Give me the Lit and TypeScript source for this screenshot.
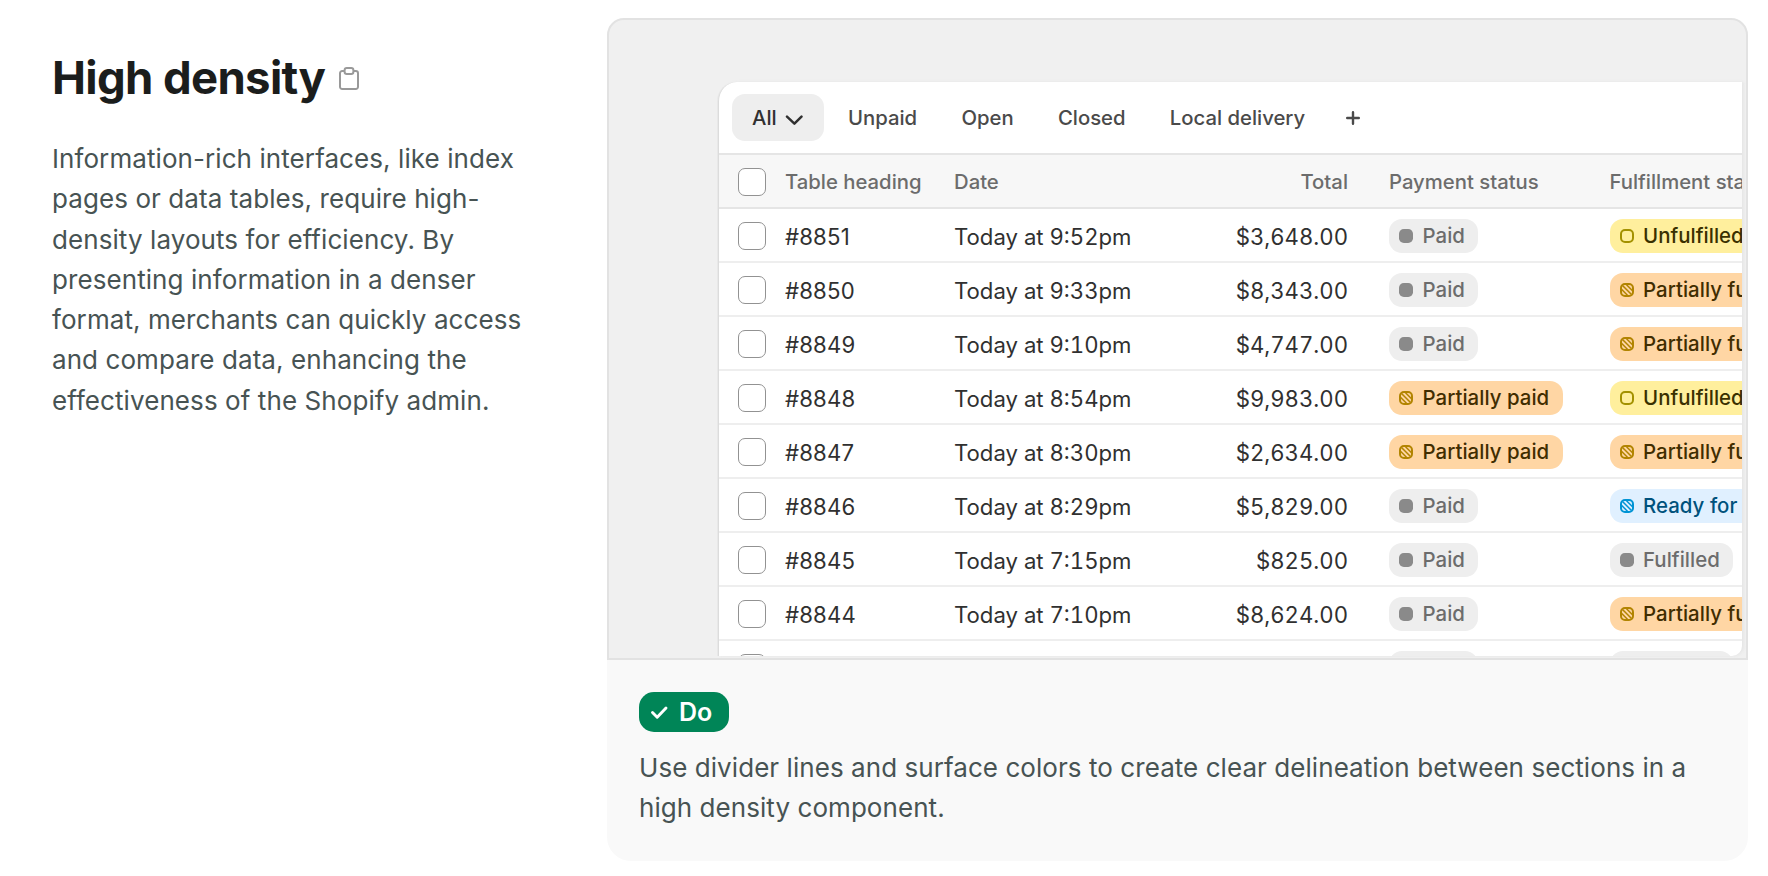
import { LitElement, html, css, svg, nothing } from "lit";

type Tone = "grey" | "yellow" | "orange" | "blue";
interface Status {
  label: string;
  tone: Tone;
}
interface Order {
  id: string;
  date: string;
  total: string;
  payment: Status;
  fulfillment: Status;
}

const paid: Status = { label: "Paid", tone: "grey" };
const partlyPaid: Status = { label: "Partially paid", tone: "orange" };
const unfulfilled: Status = { label: "Unfulfilled", tone: "yellow" };
const partlyFulfilled: Status = { label: "Partially fulfilled", tone: "orange" };
const ready: Status = { label: "Ready for pickup", tone: "blue" };
const fulfilled: Status = { label: "Fulfilled", tone: "grey" };

const orders: Order[] = [
  { id: "#8851", date: "Today at 9:52pm", total: "$3,648.00", payment: paid, fulfillment: unfulfilled },
  { id: "#8850", date: "Today at 9:33pm", total: "$8,343.00", payment: paid, fulfillment: partlyFulfilled },
  { id: "#8849", date: "Today at 9:10pm", total: "$4,747.00", payment: paid, fulfillment: partlyFulfilled },
  { id: "#8848", date: "Today at 8:54pm", total: "$9,983.00", payment: partlyPaid, fulfillment: unfulfilled },
  { id: "#8847", date: "Today at 8:30pm", total: "$2,634.00", payment: partlyPaid, fulfillment: partlyFulfilled },
  { id: "#8846", date: "Today at 8:29pm", total: "$5,829.00", payment: paid, fulfillment: ready },
  { id: "#8845", date: "Today at 7:15pm", total: "$825.00", payment: paid, fulfillment: fulfilled },
  { id: "#8844", date: "Today at 7:10pm", total: "$8,624.00", payment: paid, fulfillment: partlyFulfilled },
  { id: "", date: "", total: "", payment: paid, fulfillment: fulfilled },
];

class StatusBadge extends LitElement {
  static properties = { label: {}, tone: {} };
  declare label: string;
  declare tone: Tone;

  static styles = css`
    :host {
      display: inline-flex;
    }
    .badge {
      display: flex;
      align-items: center;
      gap: 9.5px;
      height: 34px;
      padding: 0 13.5px 0 10px;
      border-radius: 13px;
      font-size: 20.4px;
      font-weight: 500;
      letter-spacing: 0.04px;
      white-space: nowrap;
    }
    .label {
      padding-bottom: 1.5px;
    }
    svg {
      display: block;
      width: 14px;
      height: 14px;
      flex: none;
    }
    .grey {
      background: #eeeeee;
      color: #6c6c6c;
      font-weight: 450;
    }
    .grey svg {
      color: #8a8a8a;
    }
    .yellow {
      background: #ffef9d;
      color: #3a3000;
    }
    .yellow svg {
      color: #a39100;
    }
    .orange {
      background: #ffd6a4;
      color: #412d00;
    }
    .orange svg {
      color: #b28400;
    }
    .blue {
      background: #e0f0ff;
      color: #00527c;
    }
    .blue svg {
      color: #0094d5;
    }
  `;

  private pip() {
    if (this.tone === "grey") {
      return svg`<rect width="14" height="14" rx="4.8" fill="currentColor" />`;
    }
    const frame = svg`<rect x="1" y="1" width="12" height="12" rx="4" fill="none" stroke="currentColor" stroke-width="2" />`;
    if (this.tone === "yellow") return frame;
    return svg`${frame}<path d="M1.500 6.300l6.200 6.200M2.500 2.500l9 9M6.300 1.500l6.200 6.200" fill="none" stroke="currentColor" stroke-width="1.5" />`;
  }

  render() {
    return html`<span class="badge ${this.tone}"
      ><svg viewBox="0 0 14 14">${this.pip()}</svg><span class="label">${this.label}</span></span
    >`;
  }
}
customElements.define("status-badge", StatusBadge);

class OrderTable extends LitElement {
  static styles = css`
    :host {
      display: block;
      width: 1024px;
      height: 574px;
      overflow: hidden;
      box-sizing: border-box;
      border-left: 1px solid #dcdcdc;
      border-radius: 19px 0 10px 0;
      background: #fff;
      box-shadow: -1px 0 0 #e8e8e8, 2px 0 3px #e6e6e6;
    }
    .tabs {
      display: flex;
      align-items: center;
      box-sizing: border-box;
      height: 71px;
      padding-left: 12.5px;
      font-size: 20.3px;
      font-weight: 500;
      color: #4a4a4a;
    }
    .tab {
      margin-right: 44.3px;
      white-space: nowrap;
    }
    .current {
      display: flex;
      align-items: center;
      box-sizing: border-box;
      width: 92.5px;
      height: 47px;
      margin-right: 24px;
      padding-left: 20.5px;
      gap: 8px;
      border-radius: 13px;
      background: #eeeeee;
      color: #303030;
    }
    svg {
      display: block;
      flex: none;
    }
    .chevron {
      margin-top: 4px;
    }
    .plus {
      margin-left: -3.5px;
    }
    .row {
      display: grid;
      grid-template-columns: 47px 169px 212px 182px 41px 220.5px 300px;
      align-items: center;
      box-sizing: border-box;
      height: 54px;
      padding: 2px 0 0 19px;
      border-top: 2px solid #eeeeee;
      font-size: 22.15px;
      font-variant-numeric: tabular-nums;
      white-space: nowrap;
      color: #303030;
    }
    .row > span:not(.check, .badges) {
      padding-top: 2px;
    }
    .head {
      background: #f7f7f7;
      border-top-color: #e5e5e5;
      font-size: 20.3px;
      font-weight: 500;
      color: #6c6c6c;
    }
    .row.head > span:not(.check) {
      padding: 0 0 1.5px;
    }
    .head + .row {
      border-top-color: #e5e5e5;
    }
    .check {
      box-sizing: border-box;
      width: 27.5px;
      height: 28px;
      border: 1.5px solid #929292;
      border-radius: 7px;
      background: #fff;
    }
    .id {
      font-variant-numeric: normal;
      letter-spacing: 0.2px;
    }
    .total {
      text-align: right;
    }
    .payment {
      grid-column: 6;
    }
    .badges {
      display: flex;
    }
  `;

  render() {
    return html`
      <div class="tabs">
        <span class="current"
          >All<svg class="chevron" width="18" height="12" viewBox="0 0 18 12">
            <path d="M2 2.600 9.400 9.600l7.100-7" fill="none" stroke="currentColor" stroke-width="2.5" stroke-linecap="round" stroke-linejoin="round" /></svg
        ></span>
        <span class="tab">Unpaid</span>
        <span class="tab">Open</span>
        <span class="tab">Closed</span>
        <span class="tab">Local delivery</span>
        <svg class="plus" width="14" height="14" viewBox="0 0 14 14">
          <path d="M7 1.200v11.600M1.200 7h11.600" fill="none" stroke="currentColor" stroke-width="2.4" stroke-linecap="round" />
        </svg>
      </div>
      <div class="row head">
        <span class="check"></span>
        <span>Table heading</span>
        <span>Date</span>
        <span class="total">Total</span>
        <span class="payment">Payment status</span>
        <span>Fulfillment status</span>
      </div>
      ${orders.map(
        (o) => html`
          <div class="row">
            <span class="check"></span>
            <span class="id">${o.id || nothing}</span>
            <span>${o.date || nothing}</span>
            <span class="total">${o.total || nothing}</span>
            <span class="payment badges"><status-badge .label=${o.payment.label} .tone=${o.payment.tone}></status-badge></span>
            <span class="badges"><status-badge .label=${o.fulfillment.label} .tone=${o.fulfillment.tone}></status-badge></span>
          </div>
        `,
      )}
    `;
  }
}
customElements.define("order-table", OrderTable);

class AppRoot extends LitElement {
  static styles = css`
    :host {
      display: grid;
      grid-template-columns: 487px 1141px;
      column-gap: 68px;
      box-sizing: border-box;
      height: 876px;
      padding: 18px 0 15px 52px;
      overflow: hidden;
      background: #fff;
      font-family: Inter, "Liberation Sans", sans-serif;
      color: #475353;
    }
    .intro {
      padding-top: 32px;
    }
    .title {
      display: flex;
      align-items: center;
      gap: 13px;
    }
    h2 {
      margin: 0;
      font-size: 45.5px;
      font-weight: 700;
      line-height: 56px;
      letter-spacing: -0.65px;
      color: #1b1d1c;
    }
    p {
      margin: 0;
      font-size: 26px;
      line-height: 40px;
      letter-spacing: 0.06px;
    }
    .intro p {
      margin-top: 33px;
      line-height: 40.3px;
      letter-spacing: 0.08px;
    }
    svg {
      display: block;
      flex: none;
    }
    .title svg {
      margin-top: 1px;
    }
    .example {
      display: flex;
      flex-direction: column;
      border-radius: 24px;
      background: #f9f9f9;
    }
    .stage {
      display: flex;
      justify-content: flex-end;
      box-sizing: border-box;
      height: 642px;
      padding: 62px 4px 2px 0;
      border: 2px solid #e2e2e2;
      border-radius: 17px 17px 0 0;
      background: #f0f0f0;
      overflow: hidden;
    }
    .caption {
      padding: 32px 32px 0;
    }
    .do {
      display: flex;
      align-items: center;
      box-sizing: border-box;
      width: 90px;
      height: 40px;
      margin-bottom: 16px;
      padding-left: 11px;
      gap: 10px;
      border-radius: 15px;
      background: #008557;
      color: #fff;
      font-size: 25px;
      font-weight: 600;
    }
  `;

  render() {
    return html`
      <section class="intro">
        <div class="title">
          <h2>High density</h2>
          <svg width="22" height="24" viewBox="0 0 22 24">
            <g fill="none" stroke="#999" stroke-width="2">
              <path d="M6 4H4.2A2.2 2.2 0 0 0 2 6.2v13.6A2.2 2.2 0 0 0 4.2 22h13.6a2.2 2.2 0 0 0 2.2-2.2V6.2A2.2 2.2 0 0 0 17.800 4H16" />
              <rect x="6.600" y="1" width="8.800" height="6" rx="2.200" />
            </g>
          </svg>
        </div>
        <p>
          Information-rich interfaces, like index pages or data tables, require high-density layouts for efficiency. By
          presenting information in a denser format, merchants can quickly access and compare data, enhancing the
          effectiveness of the Shopify admin.
        </p>
      </section>
      <section class="example">
        <div class="stage"><order-table></order-table></div>
        <div class="caption">
          <div class="do">
            <svg width="19" height="16" viewBox="0 0 19 16">
              <path d="m2.500 8.500 4.700 4.700L16 4" fill="none" stroke="#fff" stroke-width="2.900" stroke-linecap="round" stroke-linejoin="round" />
            </svg>
            Do
          </div>
          <p>
            Use divider lines and surface colors to create clear delineation between sections in a high density
            component.
          </p>
        </div>
      </section>
    `;
  }
}
customElements.define("app-root", AppRoot);
